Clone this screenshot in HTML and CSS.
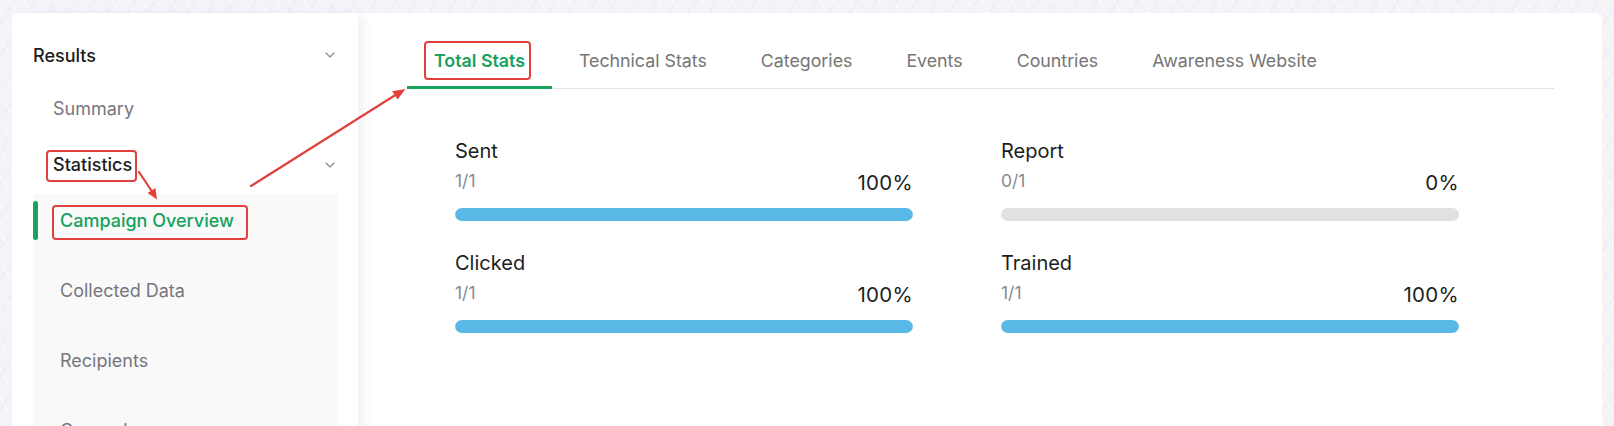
FILE: index.html
```html
<!DOCTYPE html>
<html lang="en">
<head>
<meta charset="utf-8">
<title>Campaign Overview</title>
<link rel="stylesheet" href="styles.css">
</head>
<body>
<div class="page">
  <div class="panel">
    <aside class="sidebar">
      <div class="nav-head">
        <span>Results</span>
        <svg class="chev" width="10" height="6" viewBox="0 0 10 6"><path d="M1 1l4 4 4-4" fill="none" stroke="#8c8c92" stroke-width="1.3" stroke-linecap="round" stroke-linejoin="round"/></svg>
      </div>
      <div class="nav-link">Summary</div>
      <div class="nav-head nav-sub">
        <span class="annot annot-stat">Statistics</span>
        <svg class="chev" width="10" height="6" viewBox="0 0 10 6"><path d="M1 1l4 4 4-4" fill="none" stroke="#8c8c92" stroke-width="1.3" stroke-linecap="round" stroke-linejoin="round"/></svg>
      </div>
      <ul class="submenu">
        <li class="sub-item active"><span class="annot annot-co">Campaign Overview</span></li>
        <li class="sub-item">Collected Data</li>
        <li class="sub-item">Recipients</li>
        <li class="sub-item">Opened</li>
      </ul>
    </aside>
    <main class="content">
      <nav class="tabs">
        <div class="tab active"><span class="annot annot-tab">Total Stats</span></div>
        <div class="tab">Technical Stats</div>
        <div class="tab">Categories</div>
        <div class="tab">Events</div>
        <div class="tab">Countries</div>
        <div class="tab">Awareness Website</div>
      </nav>
      <section class="stats">
        <div class="stat">
          <div class="stat-label">Sent</div>
          <div class="stat-meta"><span class="frac">1/1</span><span class="pct">100%</span></div>
          <div class="bar"><div class="fill" style="width:100%"></div></div>
        </div>
        <div class="stat">
          <div class="stat-label">Report</div>
          <div class="stat-meta"><span class="frac">0/1</span><span class="pct">0%</span></div>
          <div class="bar"><div class="fill" style="width:0%"></div></div>
        </div>
        <div class="stat">
          <div class="stat-label">Clicked</div>
          <div class="stat-meta"><span class="frac">1/1</span><span class="pct">100%</span></div>
          <div class="bar"><div class="fill" style="width:100%"></div></div>
        </div>
        <div class="stat">
          <div class="stat-label">Trained</div>
          <div class="stat-meta"><span class="frac">1/1</span><span class="pct">100%</span></div>
          <div class="bar"><div class="fill" style="width:100%"></div></div>
        </div>
      </section>
    </main>
  </div>
  <svg class="arrows" width="1614" height="426" viewBox="0 0 1614 426">
    <line x1="139" y1="172" x2="152" y2="191.5" stroke="#e2403d" stroke-width="2.2" stroke-linecap="round"/>
    <polygon points="157,199.5 155.4,187.9 147.6,193.1" fill="#e2403d"/>
    <line x1="251" y1="186" x2="395" y2="95.3" stroke="#e2403d" stroke-width="2.2" stroke-linecap="round"/>
    <polygon points="405.5,89 397.6,99.6 392.2,91.2" fill="#e2403d"/>
  </svg>
</div>
</body>
</html>
```
FILE: styles.css
```css
html, body {
  margin: 0;
  height: 426px;
  overflow: hidden;
}

body {
  font-family: Inter, "Noto Sans", sans-serif;
  background-color: #f3f3f8;
  background-image:
    repeating-linear-gradient(62deg, rgba(255,255,255,0.55) 0 1px, transparent 1px 13px),
    repeating-linear-gradient(-58deg, rgba(225,225,236,0.45) 0 1px, transparent 1px 17px);
}

.page {
  position: relative;
  box-sizing: border-box;
  height: 426px;
  padding: 13px 12px 0;
}

.panel {
  display: flex;
  height: 440px;
  background: #ffffff;
  border-radius: 6px 6px 0 0;
}

/* Sidebar */
.sidebar {
  position: relative;
  z-index: 1;
  width: 346px;
  flex: none;
  box-sizing: border-box;
  padding: 22px 20px 0 21px;
  background: #ffffff;
  border-radius: 6px 0 0 0;
  box-shadow: 7px 0 12px -3px rgba(60, 60, 130, 0.09);
}

.nav-head {
  height: 40px;
  display: flex;
  align-items: center;
  justify-content: space-between;
  padding-right: 3px;
  font-size: 18px;
  font-weight: 500;
  color: #1d1d20;
}

.nav-sub {
  margin-top: 17px;
  padding-left: 20px;
}

.chev {
  display: block;
}

.nav-link {
  margin-top: 13px;
  height: 40px;
  display: flex;
  align-items: center;
  padding-left: 20px;
  font-size: 18px;
  color: #76767e;
}

.submenu {
  list-style: none;
  margin: 9px 0 0;
  padding: 7px 0 0;
  height: 400px;
  background: #f9f9fa;
}

.sub-item {
  position: relative;
  height: 39px;
  display: flex;
  align-items: center;
  padding-left: 27px;
  margin-bottom: 31px;
  font-size: 18px;
  color: #76767e;
}

.sub-item.active {
  color: #15a15a;
  font-weight: 500;
}

.sub-item.active::before {
  content: "";
  position: absolute;
  left: 0;
  top: 0;
  width: 5px;
  height: 39px;
  border-radius: 3px;
  background: #14a65b;
}

/* Annotation boxes */
.annot {
  position: relative;
  display: inline-block;
  line-height: 20px;
}

.annot::after {
  content: "";
  position: absolute;
  border: 2px solid #e2403d;
  border-radius: 4px;
}

.annot-stat::after {
  left: -7px;
  right: -5px;
  top: -5px;
  bottom: -7px;
}

.annot-co::after {
  left: -8px;
  right: -14px;
  top: -6px;
  bottom: -9px;
}

.annot-tab::after {
  left: -10px;
  right: -6px;
  top: -10px;
  bottom: -9px;
}

/* Content */
.content {
  flex: 1;
  padding: 28px 48px 0 49px;
}

.tabs {
  display: flex;
  border-bottom: 1px solid #e3e3e6;
}

.tab {
  height: 48px;
  box-sizing: border-box;
  padding: 0 27px 6px;
  margin-bottom: -1px;
  display: flex;
  align-items: center;
  border-bottom: 3px solid transparent;
  font-size: 17.8px;
  color: #757575;
}

.tab.active {
  border-bottom-color: #17a25d;
  color: #17a25d;
  font-weight: 600;
}

.stats {
  display: grid;
  grid-template-columns: 458px 458px;
  column-gap: 88px;
  row-gap: 30px;
  margin: 50px 0 0 48px;
}

.stat-label {
  font-size: 20px;
  line-height: 24px;
  color: #1d1d20;
}

.stat-meta {
  display: flex;
  justify-content: space-between;
  align-items: flex-start;
  margin-top: 8px;
  height: 23px;
}

.frac {
  font-size: 17.5px;
  line-height: 20px;
  color: #8a8a8e;
}

.pct {
  font-size: 20.5px;
  line-height: 23px;
  letter-spacing: 0.3px;
  color: #1d1d20;
}

.bar {
  margin-top: 14px;
  height: 13px;
  border-radius: 7px;
  background: #e1e1e1;
  overflow: hidden;
}

.fill {
  height: 100%;
  border-radius: 7px;
  background: #58b9e7;
}

.arrows {
  position: absolute;
  left: 0;
  top: 0;
  pointer-events: none;
  z-index: 5;
}
```
